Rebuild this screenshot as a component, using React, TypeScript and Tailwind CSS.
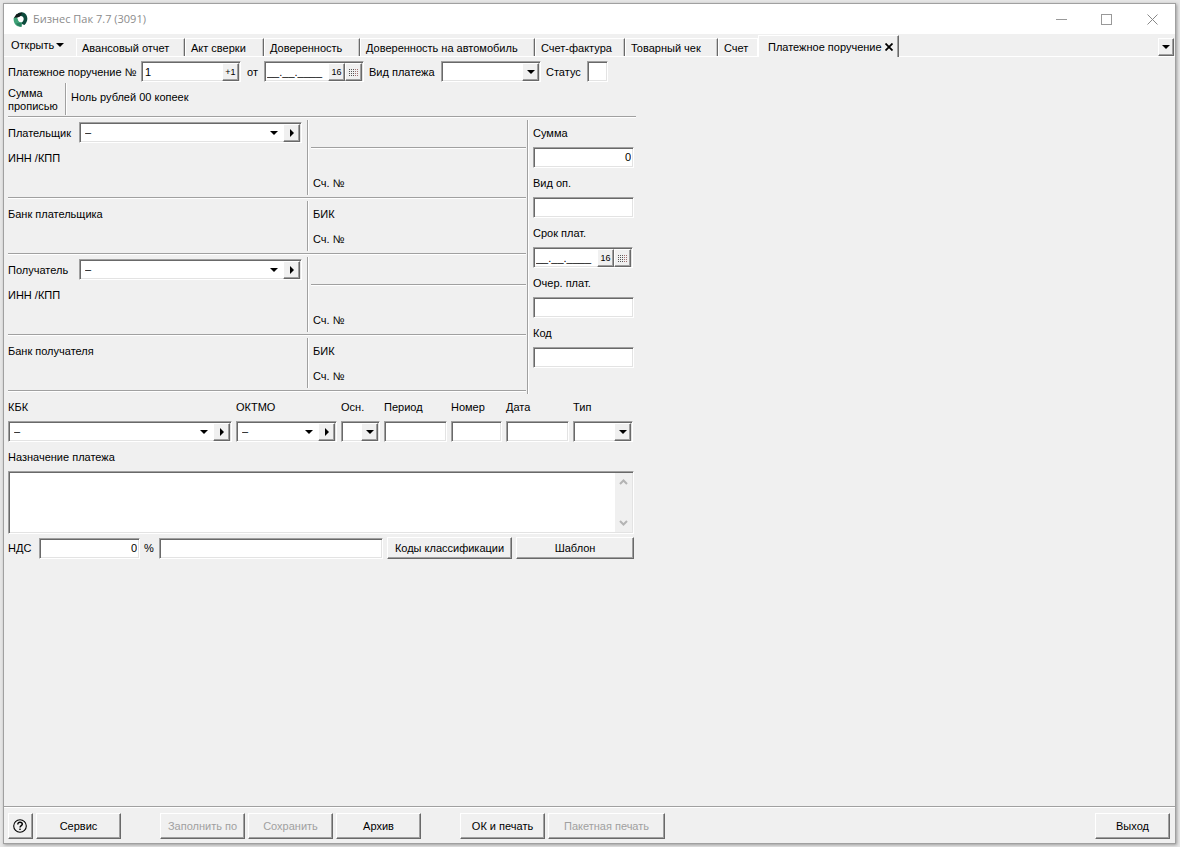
import type { ReactNode } from "react";

const SUNKEN =
  "border border-t-[#a0a0a0] border-l-[#a0a0a0] border-r-white border-b-white shadow-[inset_1px_1px_0_#696969,inset_-1px_-1px_0_#e3e3e3]";
const RAISED =
  "border border-t-white border-l-white border-r-[#696969] border-b-[#696969] shadow-[inset_-1px_-1px_0_#a0a0a0] bg-[#f0f0f0]";

function DownArrow() {
  return (
    <svg width="8" height="4" viewBox="0 0 8 4" className="shrink-0" aria-hidden="true">
      <path d="M0 0h8L4 4z" fill="#000" />
    </svg>
  );
}

function RightArrow() {
  return (
    <svg width="4" height="8" viewBox="0 0 4 8" className="shrink-0" aria-hidden="true">
      <path d="M0 0v8l4-4z" fill="#000" />
    </svg>
  );
}

function Groove() {
  return <div className="h-[2px] border-t border-b border-t-[#a0a0a0] border-b-white" />;
}

function VGroove({ className = "" }: { className?: string }) {
  return <div className={`w-[2px] shrink-0 border-l border-r border-l-[#a0a0a0] border-r-white ${className}`} />;
}

function MiniButton({ label, className = "", children }: { label: string; className?: string; children: ReactNode }) {
  return (
    <button
      type="button"
      aria-label={label}
      className={`flex h-[18px] w-[17px] shrink-0 items-center justify-center ${RAISED} ${className}`}
    >
      {children}
    </button>
  );
}

function Field({ id, value = "", right = false, className = "" }: { id: string; value?: string; right?: boolean; className?: string }) {
  return (
    <input
      id={id}
      defaultValue={value}
      className={`block h-[21px] min-w-0 bg-white pb-px outline-none ${SUNKEN} ${right ? "pr-[2px] text-right" : "pl-1"} ${className}`}
    />
  );
}

function DateField({ id, className = "" }: { id: string; className?: string }) {
  return (
    <div className={`flex h-[21px] bg-white pt-px pr-px pl-[2px] ${SUNKEN} ${className}`}>
      <input id={id} defaultValue="__.__.____" className="h-[17px] min-w-0 flex-1 bg-transparent outline-none" />
      <MiniButton label="Сегодня" className="text-[9px]">
        16
      </MiniButton>
      <MiniButton label="Календарь">
        <svg width="9" height="7" viewBox="0 0 9 7" shapeRendering="crispEdges" aria-hidden="true">
          {[0, 2, 4, 6].map((y) =>
            [0, 2, 4, 6, 8].map((x) => (
              <rect key={`${x}-${y}`} x={x} y={y} width="1" height="1" fill={x > 5 ? "#a07070" : "#555"} />
            )),
          )}
        </svg>
      </MiniButton>
    </div>
  );
}

function DropDown({ id, className = "" }: { id: string; className?: string }) {
  return (
    <div className={`grid h-[21px] bg-white p-px ${SUNKEN} ${className}`}>
      <select id={id} className="col-start-1 row-start-1 h-[17px] w-full appearance-none bg-transparent pl-1 outline-none">
        <option />
      </select>
      <span
        className={`pointer-events-none col-start-1 row-start-1 flex h-[18px] w-[17px] items-center justify-center justify-self-end ${RAISED}`}
      >
        <DownArrow />
      </span>
    </div>
  );
}

function PickList({ id, className = "" }: { id: string; className?: string }) {
  return (
    <div className={`flex h-[21px] bg-white p-px ${SUNKEN} ${className}`}>
      <div className="grid min-w-0 flex-1 items-center">
        <select id={id} className="col-start-1 row-start-1 h-[17px] w-full appearance-none bg-transparent pb-px pl-1 outline-none">
          <option>–</option>
        </select>
        <span className="pointer-events-none col-start-1 row-start-1 mr-[5px] justify-self-end">
          <DownArrow />
        </span>
      </div>
      <MiniButton label="Открыть справочник">
        <RightArrow />
      </MiniButton>
    </div>
  );
}

function PushButton({ children, disabled = false, className = "" }: { children: ReactNode; disabled?: boolean; className?: string }) {
  return (
    <button
      type="button"
      disabled={disabled}
      className={`flex h-[26px] shrink-0 items-center justify-center whitespace-nowrap disabled:text-[#a0a0a0] ${RAISED} ${className}`}
    >
      {children}
    </button>
  );
}

function PartyBlock({ id, label }: { id: string; label: string }) {
  return (
    <div className="flex h-[79px]">
      <div className="w-[299px] shrink-0 pt-1">
        <div className="flex items-center">
          <label htmlFor={id} className="w-[71px]">
            {label}
          </label>
          <PickList id={id} className="w-[223px]" />
        </div>
        <p className="mt-2">ИНН /КПП</p>
      </div>
      <VGroove className="my-[2px]" />
      <div className="flex flex-1 flex-col pl-[2px]">
        <div className="h-[29px]" />
        <Groove />
        <p className="mt-[27px] pl-[2px]">Сч. №</p>
      </div>
    </div>
  );
}

function BankBlock({ label }: { label: string }) {
  return (
    <div className="flex h-[54px]">
      <p className="w-[299px] shrink-0 pt-2">{label}</p>
      <VGroove className="my-[2px]" />
      <div className="flex flex-col gap-[11px] pt-2 pl-1">
        <p>БИК</p>
        <p>Сч. №</p>
      </div>
    </div>
  );
}

const tabs = [
  { name: "Авансовый отчет", width: "w-[109px]" },
  { name: "Акт сверки", width: "w-[79px]" },
  { name: "Доверенность", width: "w-[96px]" },
  { name: "Доверенность на автомобиль", width: "w-[175px]" },
  { name: "Счет-фактура", width: "w-[90px]" },
  { name: "Товарный чек", width: "w-[93px]" },
];

function TabBar() {
  return (
    <nav className="flex h-[23px] shrink-0 items-end border-b border-b-white pt-px">
      <button type="button" className="mb-1 ml-[7px] flex w-[65px] items-center gap-[2px]">
        Открыть
        <DownArrow />
      </button>
      {tabs.map((t) => (
        <button
          key={t.name}
          type="button"
          className={`h-[18px] shrink-0 border-t border-r border-l border-t-white border-r-[#696969] border-l-white pl-[5px] text-left whitespace-nowrap shadow-[inset_-1px_0_0_#c8c8c8] ${t.width}`}
        >
          {t.name}
        </button>
      ))}
      <button type="button" className="h-[18px] w-[40px] border-t border-r border-l border-white pl-[5px] text-left">
        Счет
      </button>
      <button
        type="button"
        className="-mb-px flex h-[22px] w-[141px] shrink-0 items-center gap-[3px] border-t border-r border-l border-t-white border-r-[#696969] border-l-white bg-[#f0f0f0] pl-[9px] whitespace-nowrap shadow-[inset_-1px_0_0_#a0a0a0]"
      >
        Платежное поручение
        <svg width="8" height="8" viewBox="0 0 8 8" aria-hidden="true">
          <path d="M0.5 0.5l7 7M7.500 0.500l-7 7" stroke="#000" strokeWidth="1.800" />
        </svg>
      </button>
      <button
        type="button"
        aria-label="Список вкладок"
        className={`mr-px ml-auto flex h-[18px] w-4 items-center justify-center ${RAISED}`}
      >
        <DownArrow />
      </button>
    </nav>
  );
}

function TitleBar() {
  return (
    <header className="flex h-[30px] shrink-0 items-center bg-white pl-[9px]">
      <svg width="15" height="15" viewBox="0 0 15 15" aria-hidden="true">
        <path d="M5 1.300C8-0.200 11 0 13 2.500c2 3 2 7-1.500 10.500-1-0.200-3-1-3.500-2 2.500-1.500 3.500-4 2-6C9 3.500 7 3.500 4.500 5z" fill="#0c4a3c" />
        <path d="M3.500 2L9.500 0.500 7 4.500 3.500 6 0.800 6z" fill="#111b1b" />
        <path d="M0.600 6C3 4.800 4.500 5.500 4.700 7c0.300 2.500 2 3.500 4.300 3.500L8.500 14.700C3.500 15 0.300 12 0.600 6z" fill="#3fa277" />
        <path d="M3 11.500l5.500-1 0 4.200C6 14.800 4.200 13.500 3 11.500z" fill="#2b7f60" />
      </svg>
      <h1 className="ml-[5px] font-['Open_Sans','Noto_Sans',sans-serif] text-[11px] text-[#8c8c8c]">Бизнес Пак 7.7 (3091)</h1>
      <div className="ml-auto flex">
        <button type="button" aria-label="Свернуть" className="flex h-[29px] w-[46px] items-center justify-center">
          <svg width="11" height="11" viewBox="0 0 11 11" aria-hidden="true">
            <path d="M0 5.500h11" stroke="#999" />
          </svg>
        </button>
        <button type="button" aria-label="Развернуть" className="flex h-[29px] w-[45px] items-center justify-center">
          <svg width="11" height="11" viewBox="0 0 11 11" aria-hidden="true">
            <rect x="0.500" y="0.500" width="10" height="10" fill="none" stroke="#999" />
          </svg>
        </button>
        <button type="button" aria-label="Закрыть" className="flex h-[29px] w-[46px] items-center justify-center">
          <svg width="11" height="11" viewBox="0 0 11 11" aria-hidden="true">
            <path d="M0.500 0.500l10 10M10.500 0.500l-10 10" stroke="#888" />
          </svg>
        </button>
      </div>
    </header>
  );
}

const sideFields = [
  { id: "sum", label: "Сумма", value: "0" },
  { id: "kind", label: "Вид оп." },
  { id: "due", label: "Срок плат.", date: true },
  { id: "order", label: "Очер. плат." },
  { id: "code", label: "Код" },
];

function Labeled({ id, label, children }: { id: string; label: string; children: ReactNode }) {
  return (
    <div className="flex flex-col gap-[7px]">
      <label htmlFor={id}>{label}</label>
      {children}
    </div>
  );
}

export default function App() {
  return (
    <div className="flex min-h-screen flex-col bg-[#e6e6e6] pt-[3px] pr-1 pb-[3px] pl-[3px] font-['Liberation_Sans',Arial,sans-serif] text-[11px] leading-[14px] text-black">
      <div className="flex flex-1 flex-col border border-[#a0a0a0] bg-[#f0f0f0] shadow-[1px_1px_3px_#999]">
        <TitleBar />
        <TabBar />
        <main className="w-[632px] flex-1 pt-1 pl-1">
          <div className="flex items-center">
            <label htmlFor="num" className="w-[133px] whitespace-nowrap">
              Платежное поручение №
            </label>
            <div className={`flex h-[21px] w-[100px] bg-white p-px ${SUNKEN}`}>
              <input id="num" defaultValue="1" className="h-[17px] min-w-0 flex-1 bg-transparent pl-[2px] outline-none" />
              <MiniButton label="Следующий номер" className="text-[9px]">
                +1
              </MiniButton>
            </div>
            <label htmlFor="date" className="w-[23px] pl-[6px]">
              от
            </label>
            <DateField id="date" className="w-[100px]" />
            <label htmlFor="type" className="w-[77px] pl-[5px] whitespace-nowrap">
              Вид платежа
            </label>
            <DropDown id="type" className="w-[100px]" />
            <label htmlFor="status" className="w-[46px] pl-[5px]">
              Статус
            </label>
            <Field id="status" className="w-[21px]" />
          </div>
          <div className="flex h-[34px] items-center">
            <p className="w-[57px] pt-[2px] leading-[13px]">
              Сумма
              <br />
              прописью
            </p>
            <VGroove className="h-[32px]" />
            <p className="pb-1 pl-1">Ноль рублей 00 копеек</p>
          </div>
          <Groove />
          <div className="flex">
            <div className="w-[518px]">
              <PartyBlock id="payer" label="Плательщик" />
              <Groove />
              <BankBlock label="Банк плательщика" />
              <Groove />
              <PartyBlock id="payee" label="Получатель" />
              <Groove />
              <BankBlock label="Банк получателя" />
              <Groove />
            </div>
            <VGroove className="mt-[2px] -mb-[2px] ml-px" />
            <div className="flex flex-col gap-2 pt-2 pl-1">
              {sideFields.map((f) => (
                <Labeled key={f.id} id={f.id} label={f.label}>
                  {f.date ? (
                    <DateField id={f.id} className="w-[100px]" />
                  ) : (
                    <Field id={f.id} value={f.value} right={f.value === "0"} className="w-[101px]" />
                  )}
                </Labeled>
              ))}
            </div>
          </div>
          <div className="mt-2 flex gap-1">
            <Labeled id="kbk" label="КБК">
              <PickList id="kbk" className="w-[224px]" />
            </Labeled>
            <Labeled id="oktmo" label="ОКТМО">
              <PickList id="oktmo" className="w-[101px]" />
            </Labeled>
            <Labeled id="base" label="Осн.">
              <DropDown id="base" className="w-[39px]" />
            </Labeled>
            <Labeled id="period" label="Период">
              <Field id="period" className="w-[63px]" />
            </Labeled>
            <Labeled id="number" label="Номер">
              <Field id="number" className="w-[51px]" />
            </Labeled>
            <Labeled id="day" label="Дата">
              <Field id="day" className="w-[63px]" />
            </Labeled>
            <Labeled id="kindtype" label="Тип">
              <DropDown id="kindtype" className="w-[60px]" />
            </Labeled>
          </div>
          <label htmlFor="purpose" className="mt-2 block">
            Назначение платежа
          </label>
          <div className={`mt-[7px] flex h-[63px] w-[626px] bg-white p-px ${SUNKEN}`}>
            <textarea id="purpose" className="min-w-0 flex-1 resize-none bg-transparent p-1 outline-none" />
            <div className="flex w-[17px] flex-col items-center justify-between bg-[#f0f0f0] py-[6px]">
              <svg width="9" height="6" viewBox="0 0 9 6" aria-hidden="true">
                <path d="M1 5l3.500-3.500L8 5" fill="none" stroke="#b4b4b4" strokeWidth="2" />
              </svg>
              <svg width="9" height="6" viewBox="0 0 9 6" aria-hidden="true">
                <path d="M1 1l3.500 3.500L8 1" fill="none" stroke="#b4b4b4" strokeWidth="2" />
              </svg>
            </div>
          </div>
          <div className="mt-[3px] flex items-center">
            <label htmlFor="vat" className="w-[31px]">
              НДС
            </label>
            <Field id="vat" value="0" right className="w-[101px]" />
            <label htmlFor="vatsum" className="w-[19px] pl-1">
              %
            </label>
            <Field id="vatsum" className="w-[224px]" />
            <button type="button" className={`ml-1 h-[22px] w-[125px] whitespace-nowrap ${RAISED}`}>
              Коды классификации
            </button>
            <button type="button" className={`ml-1 h-[22px] w-[118px] ${RAISED}`}>
              Шаблон
            </button>
          </div>
        </main>
        <Groove />
        <footer className="flex h-[35px] shrink-0 items-start pt-[5px] pr-[5px] pl-1">
          <PushButton className="w-[25px] pr-px">
            <svg width="14" height="14" viewBox="0 0 14 14" role="img" aria-label="Справка">
              <circle cx="7" cy="7" r="6.300" fill="none" stroke="#000" strokeWidth="1.100" />
              <path d="M4.800 5.500C4.800 4 5.700 3.300 7 3.300s2.300 0.800 2.300 1.900C9.300 6.600 7 6.700 7 8.500" fill="none" stroke="#000" strokeWidth="1.400" />
              <rect x="6.300" y="9.600" width="1.400" height="1.400" fill="#000" />
            </svg>
          </PushButton>
          <PushButton className="ml-[3px] w-[85px]">Сервис</PushButton>
          <div className="ml-[39px] flex gap-[3px]">
            <PushButton disabled className="w-[85px]">
              Заполнить по
            </PushButton>
            <PushButton disabled className="w-[85px]">
              Сохранить
            </PushButton>
            <PushButton className="w-[85px]">Архив</PushButton>
          </div>
          <div className="ml-[39px] flex gap-[3px]">
            <PushButton className="w-[85px]">ОК и печать</PushButton>
            <PushButton disabled className="w-[117px]">
              Пакетная печать
            </PushButton>
          </div>
          <PushButton className="ml-auto w-[75px]">Выход</PushButton>
        </footer>
      </div>
    </div>
  );
}
